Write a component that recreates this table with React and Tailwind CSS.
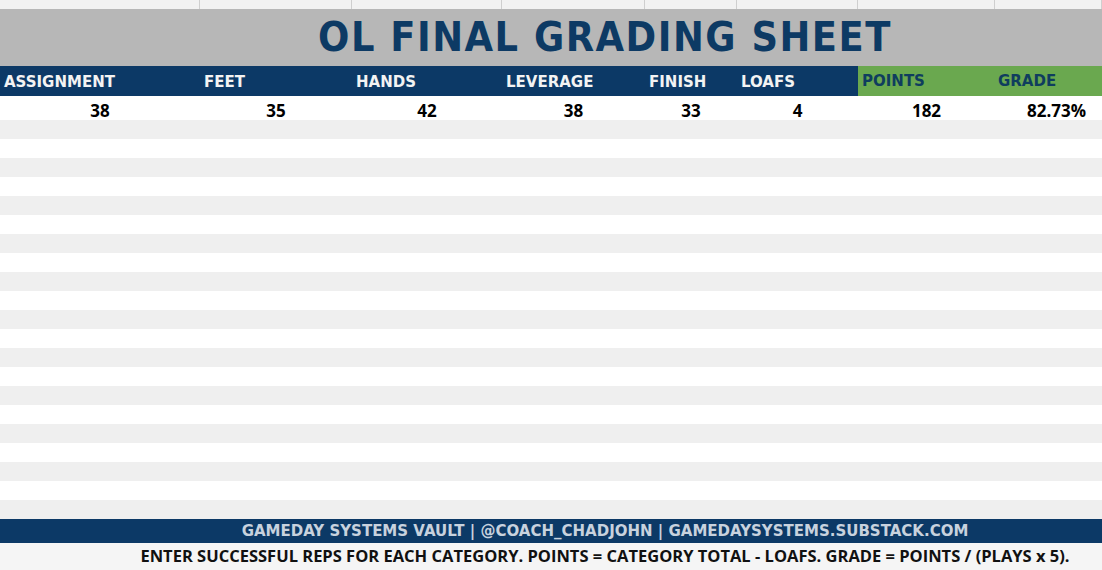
const cols = "grid grid-cols-[200px_152px_150px_143px_92px_121px_137px_1fr]";

const headers = ["ASSIGNMENT", "FEET", "HANDS", "LEVERAGE", "FINISH", "LOAFS"];
const values = ["38", "35", "42", "38", "33", "4", "182", "82.73%"];

const display = { fontFamily: '"DejaVu Sans", sans-serif' };
const body = { fontFamily: '"Open Sans", "Liberation Sans", sans-serif' };

export default function App() {
  const stripes = Array.from({ length: 21 }, (_, i) => i);

  return (
    <div className="w-[1102px] h-[570px] overflow-hidden bg-white">
      {/* clipped row above the sheet */}
      <div className={`${cols} h-[9px] bg-[#f2f2f2]`}>
        {values.map((_, i) => (
          <div key={i} className="border-r border-[#cfcfcf]" />
        ))}
      </div>

      {/* title */}
      <div className="h-[57px] bg-[#b7b7b7] flex items-center justify-center pl-[108px]">
        <h1
          className="text-[41px] font-bold text-[#0d3a64] tracking-[1.5px] leading-none"
          style={{ fontFamily: '"DejaVu Sans Condensed", "DejaVu Sans", sans-serif' }}
        >
          OL FINAL GRADING SHEET
        </h1>
      </div>

      {/* column headers */}
      <div className={`${cols} h-[30px] text-[15px] font-bold leading-none`} style={display}>
        {headers.map((h) => (
          <div key={h} className="bg-[#0c3966] text-[#f3f3f3] flex items-center pl-[4px] pt-[2px]">
            {h}
          </div>
        ))}
        <div className="bg-[#6aa84f] text-[#0f3d5e] flex items-center pl-[4px]">POINTS</div>
        <div className="bg-[#6aa84f] text-[#0f3d5e] flex items-center pl-[3px]">GRADE</div>
      </div>

      {/* totals row */}
      <div className={`${cols} h-[24px] text-[17px] font-bold text-black leading-none`} style={body}>
        {values.map((v, i) => (
          <div
            key={i}
            className={`flex items-center justify-center pt-[4px] ${i === 7 ? "pl-[16px]" : ""}`}
          >
            {v}
          </div>
        ))}
      </div>

      {/* empty striped rows */}
      <div className="flex flex-col">
        {stripes.map((i) => (
          <div key={i} className={`h-[19px] ${i % 2 === 0 ? "bg-[#efefef]" : "bg-white"}`} />
        ))}
      </div>

      {/* footer */}
      <div
        className="h-[24px] bg-[#0c3966] flex items-center justify-center pl-[108px] text-[15px] font-bold text-[#c8d2de]"
        style={display}
      >
        GAMEDAY SYSTEMS VAULT | @COACH_CHADJOHN | GAMEDAYSYSTEMS.SUBSTACK.COM
      </div>
      <div
        className="h-[27px] bg-[#f5f5f5] flex items-center justify-center pl-[108px] text-[16.5px] font-bold text-[#111]"
        style={body}
      >
        ENTER SUCCESSFUL REPS FOR EACH CATEGORY. POINTS = CATEGORY TOTAL - LOAFS. GRADE = POINTS / (PLAYS x 5).
      </div>
    </div>
  );
}
